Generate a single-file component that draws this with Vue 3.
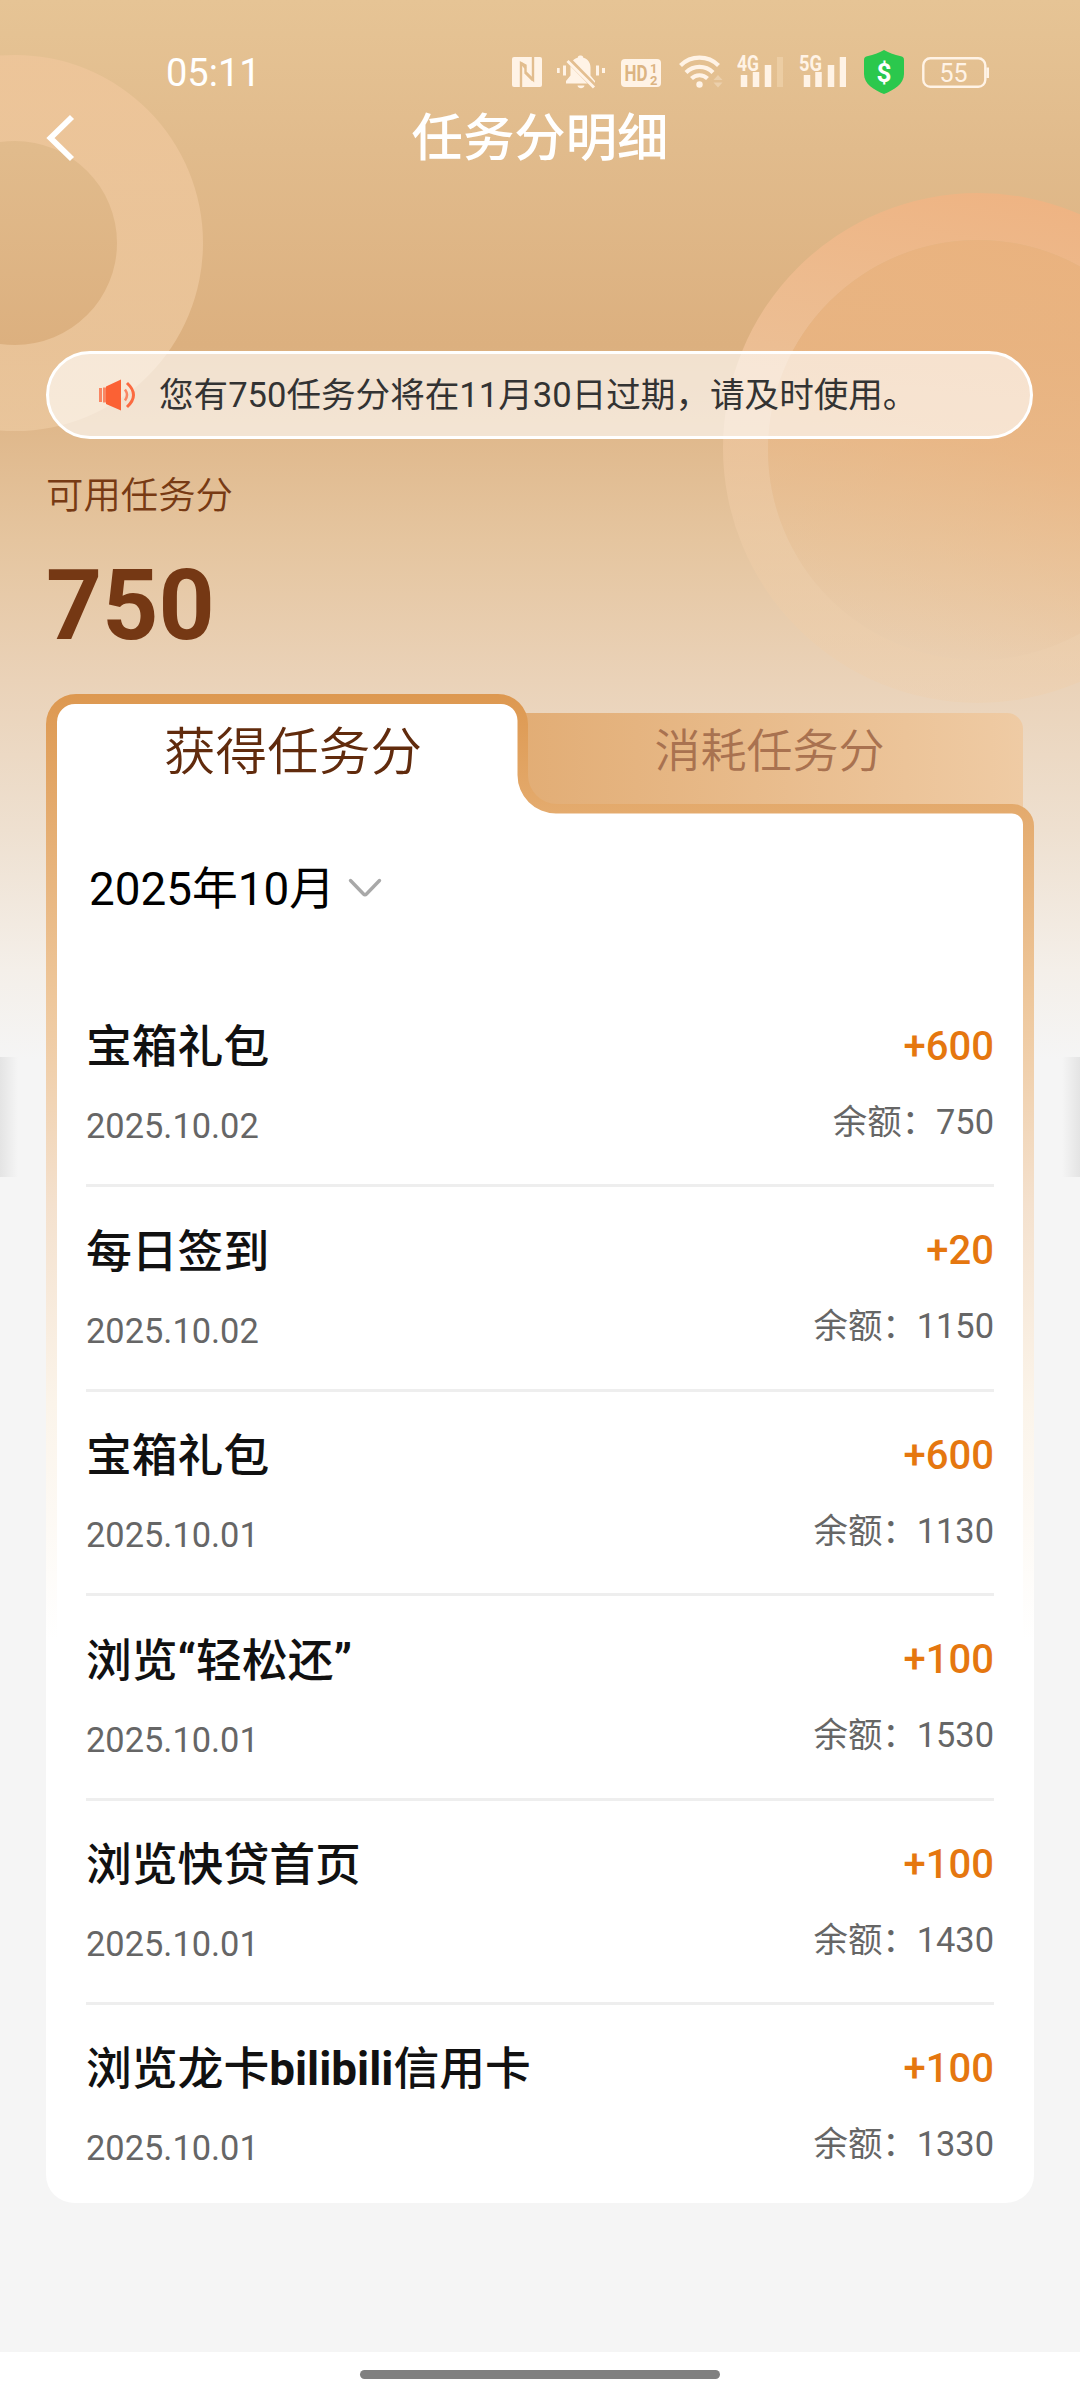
<script setup>
const records = [
  { title: ['宝箱礼包'], date: '2025.10.02', amount: '+600', balance: '750' },
  { title: ['每日签到'], date: '2025.10.02', amount: '+20', balance: '1150' },
  { title: ['宝箱礼包'], date: '2025.10.01', amount: '+600', balance: '1130' },
  { title: ['浏览', '“', '轻松还', '”'], date: '2025.10.01', amount: '+100', balance: '1530' },
  { title: ['浏览快贷首页'], date: '2025.10.01', amount: '+100', balance: '1430' },
  { title: ['浏览龙卡', 'bilibili', '信用卡'], date: '2025.10.01', amount: '+100', balance: '1330' },
]
</script>

<template>
  <div class="page" lang="zh-CN">
    <svg class="rings" width="1080" height="720" viewBox="0 0 1080 720">
      <defs>
        <linearGradient id="ringL" x1="0" y1="0" x2="0" y2="1">
          <stop offset="0" stop-color="#efc69b" stop-opacity=".8" />
          <stop offset="1" stop-color="#ecc9a0" stop-opacity=".75" />
        </linearGradient>
        <linearGradient id="ringR" x1="0.6" y1="0" x2="0.4" y2="1">
          <stop offset="0" stop-color="#f0b382" stop-opacity=".9" />
          <stop offset=".4" stop-color="#f0c299" stop-opacity=".8" />
          <stop offset=".75" stop-color="#efcda8" stop-opacity=".55" />
          <stop offset="1" stop-color="#f0cda6" stop-opacity=".25" />
        </linearGradient>
        <linearGradient id="discR" x1="0.7" y1="0" x2="0.4" y2="1">
          <stop offset="0" stop-color="#ebb27e" stop-opacity=".9" />
          <stop offset=".5" stop-color="#edb683" stop-opacity=".68" />
          <stop offset="1" stop-color="#efc69a" stop-opacity=".15" />
        </linearGradient>
      </defs>
      <path fill="url(#ringL)" fill-rule="evenodd"
        d="M-173 243a188 188 0 1 0 376 0a188 188 0 1 0-376 0zM-87 243a102 102 0 1 0 204 0a102 102 0 1 0-204 0z" />
      <path fill="url(#ringR)" fill-rule="evenodd"
        d="M723 448a255 255 0 1 0 510 0a255 255 0 1 0-510 0zM768 450a210 210 0 1 0 420 0a210 210 0 1 0-420 0z" />
      <circle cx="978" cy="450" r="210" fill="url(#discR)" />
    </svg>
    <i class="edge left"></i>
    <i class="edge right"></i>

    <div class="status">
      <span class="time">05:11</span>
      <div class="icons">
        <svg width="30" height="44" viewBox="512 50 30 44">
          <rect x="512" y="57" width="30" height="30" rx="2" fill="#fff3e6" />
          <path d="M521 87V63l4.500 2.500V72l7.500 7.500V57" fill="none" stroke="#e2bd8e" stroke-width="2.400" />
          <path d="M521 63l4.500 5M525 72.500l8 8" fill="none" stroke="#e2bd8e" stroke-width="2.400" />
        </svg>
        <svg width="48" height="44" viewBox="557 50 48 44" class="bell">
          <path d="M581 55.500c1.500 0 2.300 1 2.300 2.300 4.500 1.200 7.200 5 7.200 9.700v8l4.500 5.500v2.500h-29v-2.500l4.500-5.500v-8c0-4.700 2.700-8.500 7.200-9.700 0-1.300.8-2.300 2.300-2.300zM577.500 85.500h7c-.5 3.500-6.500 3.500-7 0z" fill="#fff3e6" />
          <path d="M568.500 60L595 87" stroke="#e3be90" stroke-width="6" />
          <path d="M567.500 61L594 87.500" stroke="#fff3e6" stroke-width="3" />
          <path d="M558.200 68v5M564.500 65.500v10M597.500 65.500v10M603.500 68v5" stroke="#fff3e6" stroke-width="3" />
        </svg>
        <svg width="40" height="44" viewBox="621 50 40 44" class="hd">
          <rect x="621" y="59" width="40" height="28" rx="4" fill="#fff3e6" />
          <text x="624.500" y="81" class="glyph" font-size="22" textLength="23" lengthAdjust="spacingAndGlyphs">HD</text>
          <text x="650" y="72.500" class="glyph" font-size="13">1</text>
          <text x="650" y="84.500" class="glyph" font-size="13">2</text>
        </svg>
        <svg width="44" height="44" viewBox="679 50 44 44" class="wifi">
          <g fill="none" stroke="#fff3e6" stroke-width="4.200">
            <path d="M680.500 65.500a27 27 0 0 1 38 0" />
            <path d="M686 72.500a19 19 0 0 1 27 0" />
            <path d="M691.500 78.500a11.500 11.500 0 0 1 16 0" />
          </g>
          <circle cx="699.500" cy="84.500" r="3.200" fill="#fff3e6" />
          <path d="M713.500 80l4.500-5 4.500 5zM713.500 82.500l4.500 5 4.500-5z" fill="#ecd0ac" />
        </svg>
        <svg width="46" height="44" viewBox="737 50 46 44" class="cell">
          <text x="737" y="71" class="net" font-size="22" textLength="22" lengthAdjust="spacingAndGlyphs">4G</text>
          <path d="M744 75v12M756 72v15M768 65v22" stroke="#fff3e6" stroke-width="6.500" />
          <path d="M780 57v30" stroke="#f0d3ac" stroke-width="6" opacity=".7" />
        </svg>
        <svg width="47" height="44" viewBox="799 50 47 44" class="cell5">
          <text x="799" y="71" class="net" font-size="22" textLength="23" lengthAdjust="spacingAndGlyphs">5G</text>
          <path d="M807 75v12M818.500 72v15M831 65v22M843 57v30" stroke="#fff3e6" stroke-width="6.500" />
        </svg>
        <svg width="40" height="44" viewBox="864 50 40 44" class="shield">
          <path d="M884 50c4 2.500 10 5 17 6.300 2 .4 3 1.700 3 3.700v14c0 10-10 16-20 20-10-4-20-10-20-20V60c0-2 1-3.300 3-3.700 7-1.300 13-3.800 17-6.300z" fill="#2bc84d" />
          <text x="884" y="81.500" text-anchor="middle" fill="#fff" font-size="26" font-weight="700">$</text>
        </svg>
        <svg width="68" height="44" viewBox="922 50 68 44" class="battery">
          <rect x="923.300" y="58.300" width="62" height="28.500" rx="7" fill="none" stroke="#fff3e6" stroke-width="2.400" />
          <path d="M987.700 67.500v10.500" stroke="#fff3e6" stroke-width="2.600" />
          <text x="953.500" y="81.500" text-anchor="middle" fill="#fff3e6" font-size="25">55</text>
        </svg>
      </div>
    </div>

    <header class="nav">
      <svg class="back" width="30" height="48" viewBox="0 0 30 48">
        <path d="M26 3L4.500 24l21.500 21" fill="none" stroke="#fff" stroke-width="5.800" />
      </svg>
      <h1>任务分明细</h1>
    </header>

    <div class="notice">
      <svg width="38" height="34" viewBox="0 0 38 34">
        <path d="M23 1.500v31L8 26V8.500z" fill="#fb6134" />
        <path d="M6.500 9.500v15M2.500 10v14" stroke="#f98663" stroke-width="3" />
        <path d="M27 11.500q4 5.500 0 11" fill="none" stroke="#f98663" stroke-width="2.500" />
        <path d="M29 5q13 12 0 24" fill="none" stroke="#fb6a40" stroke-width="3" />
      </svg>
      <span>您有750任务分将在11月30日过期，请及时使用。</span>
    </div>

    <p class="label">可用任务分</p>
    <p class="score">750</p>

    <main class="panel">
      <svg class="outline" width="988" height="1509" viewBox="46 694 988 1509">
        <defs>
          <linearGradient id="rim" gradientUnits="userSpaceOnUse" x1="0" y1="694" x2="0" y2="1640">
            <stop offset="0" stop-color="#dd9850" />
            <stop offset=".126" stop-color="#e4ab6e" />
            <stop offset=".32" stop-color="#eec79b" />
            <stop offset=".54" stop-color="#f4e1ce" />
            <stop offset=".75" stop-color="#fbf4ea" />
            <stop offset="1" stop-color="#fff" />
          </linearGradient>
          <linearGradient id="idle" x1="0" y1="0" x2="1" y2="0">
            <stop offset="0" stop-color="#e2ad75" />
            <stop offset="1" stop-color="#efcba4" />
          </linearGradient>
        </defs>
        <path d="M520 713H1007a16 16 0 0 1 16 16V810H520z" fill="url(#idle)" />
        <path d="M46 724a30 30 0 0 1 30-30H498a30 30 0 0 1 30 30V775a29 29 0 0 0 29 29H1012a22 22 0 0 1 22 22V2175a28 28 0 0 1-28 28H74a28 28 0 0 1-28-28z" fill="url(#rim)" />
        <path d="M57 722a18 18 0 0 1 18-18H501a16.500 16.500 0 0 1 16.500 16.500V775a38.500 38.500 0 0 0 38.500 38.500H1012a11 11 0 0 1 11 11V2190H57z" fill="#fff" />
      </svg>
      <div class="tabs">
        <span class="tab active">获得任务分</span>
        <span class="tab">消耗任务分</span>
      </div>
      <div class="month">
        <span>2025年10月</span>
        <svg width="34" height="20" viewBox="0 0 34 20">
          <path d="M2.500 2.500L15.500 16q1.500 1.500 3 0L31.500 2.500" fill="none" stroke="#a8a8a8" stroke-width="3.400" stroke-linecap="round" />
        </svg>
      </div>
      <ul class="list">
        <li v-for="(r, i) in records" :key="i">
          <div class="info">
            <span class="title"><span v-for="(part, k) in r.title" :key="k" :class="{ latin: k % 2 === 1 }">{{ part }}</span></span>
            <span class="date">{{ r.date }}</span>
          </div>
          <div class="sum">
            <span class="amount">{{ r.amount }}</span>
            <span class="balance">余额：{{ r.balance }}</span>
          </div>
        </li>
      </ul>
    </main>

    <footer class="home"><i></i></footer>
  </div>
</template>

<style>
body {
  margin: 0;
  background: #f5f5f5;
}
</style>

<style scoped>
.page {
  position: relative;
  box-sizing: border-box;
  display: flex;
  flex-direction: column;
  width: 1080px;
  height: 2400px;
  padding: 50px 46px 0;
  overflow: hidden;
  font-family: Roboto, "Noto Sans CJK SC", sans-serif;
  background: linear-gradient(180deg, #e6c495 0, #e1bb8c 150px, #dcb07f 345px, #dfb78a 420px, #e5c59f 540px, #ead2b8 680px, #eee0d0 830px, #f4efe9 970px, #f5f5f5 1060px);
}
.page > * {
  flex-shrink: 0;
}
.rings {
  position: absolute;
  left: 0;
  top: 0;
}
.edge {
  position: absolute;
  top: 1057px;
  width: 18px;
  height: 120px;
}
.edge.left {
  left: 0;
  background: linear-gradient(90deg, #e4e4e4, rgba(245, 245, 245, 0));
}
.edge.right {
  right: 0;
  background: linear-gradient(270deg, #e4e4e4, rgba(245, 245, 245, 0));
}
.status {
  position: relative;
  display: flex;
  justify-content: space-between;
  height: 44px;
  padding: 0 44px 0 120px;
}
.time {
  color: #fff;
  font-size: 38px;
  line-height: 46px;
}
.icons {
  display: flex;
}
.icons svg {
  display: block;
}
.bell { margin-left: 15px; }
.hd { margin-left: 16px; }
.wifi { margin-left: 18px; }
.cell { margin-left: 14px; }
.cell5 { margin-left: 16px; }
.shield { margin-left: 18px; }
.battery { margin-left: 18px; }
.glyph {
  fill: #dcb482;
  font-weight: 700;
}
.net {
  fill: #fff3e6;
  font-weight: 700;
}
.nav {
  position: relative;
  display: flex;
  align-items: center;
  justify-content: center;
  height: 88px;
}
.back {
  position: absolute;
  left: 0;
  top: 20px;
}
h1 {
  margin: 0;
  padding-top: 2px;
  color: #fff;
  font-size: 51.4px;
  font-weight: 500;
  line-height: 88px;
}
.notice {
  position: relative;
  box-sizing: border-box;
  display: flex;
  align-items: center;
  gap: 23px;
  width: 987px;
  height: 88px;
  margin-top: 169px;
  padding-left: 49px;
  border: 3px solid #fff;
  border-radius: 44px;
  color: #333;
  font-size: 34.6px;
  line-height: 82px;
  background: rgba(255, 255, 255, .62);
  white-space: nowrap;
}
.label {
  position: relative;
  margin: 32px 0 0;
  color: #773a14;
  font-size: 37.4px;
  font-weight: 350;
  line-height: 50px;
}
.score {
  position: relative;
  margin: 35px 0 0;
  color: #753814;
  font-size: 98px;
  font-weight: 700;
  line-height: 100px;
}
.panel {
  position: relative;
  width: 988px;
  height: 1509px;
  margin-top: 38px;
}
.outline {
  position: absolute;
  left: 0;
  top: 0;
}
.tabs {
  position: relative;
  display: flex;
  height: 120px;
}
.tab {
  width: 459px;
  color: #a97250;
  font-size: 46px;
  font-weight: 350;
  line-height: 115px;
  text-align: center;
}
.tab.active {
  width: 494px;
  color: #612b0d;
  font-size: 51.6px;
  line-height: 117px;
}
.month {
  position: relative;
  display: flex;
  align-items: center;
  gap: 13px;
  height: 148px;
  padding-left: 43px;
  color: #000;
  font-size: 45.8px;
}
.month span {
  margin-top: -7px;
}
.list {
  position: relative;
  margin: 20.800px 40px 0;
  padding: 0;
  list-style: none;
}
li {
  box-sizing: border-box;
  display: flex;
  justify-content: space-between;
  height: 204.450px;
  padding-top: 34px;
  border-bottom: 3px solid #eee;
}
li:last-child {
  border-bottom: 0;
}
.info,
.sum {
  display: flex;
  flex-direction: column;
}
.sum {
  align-items: flex-end;
}
.title {
  padding-top: 1.500px;
  color: #111;
  font-size: 45.800px;
  font-weight: 500;
  line-height: 60px;
}
.latin {
  font-weight: 700;
}
.date {
  margin-top: 28px;
  color: #666;
  font-size: 34.400px;
  line-height: 40px;
}
.amount {
  color: #e5770f;
  font-size: 40px;
  font-weight: 500;
  line-height: 60px;
}
.balance {
  margin-top: 25px;
  color: #666;
  font-size: 34.400px;
  line-height: 40px;
}
.home {
  display: flex;
  justify-content: center;
  align-items: flex-start;
  height: 48px;
  margin: auto -46px 0;
  background: #fff;
}
.home i {
  width: 360px;
  height: 9px;
  margin-top: 18px;
  border-radius: 5px;
  background: #808080;
}
</style>
